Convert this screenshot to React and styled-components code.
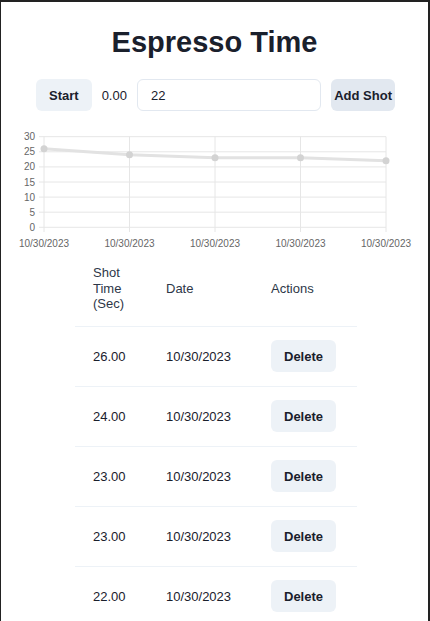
import styled, { createGlobalStyle } from "styled-components";

const GlobalStyle = createGlobalStyle`
  html, body {
    margin: 0;
    padding: 0;
    background: #fff;
  }
  body {
    font-family: "Liberation Sans", Arial, sans-serif;
    color: #1a202c;
  }
  * { box-sizing: border-box; }
`;

const Frame = styled.div`
  min-height: 100vh;
  border-top: 2px solid #222;
  border-left: 1px solid #222;
  border-right: 2px solid #222;
  padding-top: 22px;
  overflow: hidden;
`;

const Title = styled.h1`
  margin: 0;
  font-size: 29px;
  line-height: 36px;
  font-weight: 700;
  text-align: center;
  color: #1a202c;
`;

const Controls = styled.div`
  display: flex;
  align-items: center;
  gap: 10px;
  width: 359px;
  margin: 19px 0 0 35px;
`;

const Button = styled.button`
  flex-shrink: ${(p) => (p.$squeeze ? 1 : 0)};
  min-width: 0;
  height: 32px;
  padding: 0 ${(p) => (p.$squeeze ? 3 : 13)}px;
  border: none;
  border-radius: 6px;
  background: ${(p) => (p.$active ? "#e2e8f0" : "#edf2f7")};
  color: #1a202c;
  font-family: inherit;
  font-size: 13px;
  font-weight: 700;
  white-space: nowrap;
  cursor: pointer;
`;

const Timer = styled.span`
  font-size: 13px;
  color: #1a202c;
`;

const Input = styled.input`
  flex: 1;
  min-width: 0;
  width: 183px;
  height: 32px;
  padding: 0 13px;
  border: 1px solid #e2e8f0;
  border-radius: 6px;
  font-family: inherit;
  font-size: 13px;
  color: #1a202c;
  outline: none;
`;

const ChartSvg = styled.svg`
  display: block;
  margin-top: 19px;
`;

const Table = styled.table`
  width: 282px;
  margin: 0 0 0 74px;
  border-collapse: collapse;
  font-size: 13px;
`;

const Th = styled.th`
  width: ${(p) => p.$w}px;
  padding: 13px 18px 14px;
  text-align: left;
  font-weight: 400;
  line-height: 15.6px;
  color: #2d3748;
  vertical-align: middle;
  border-bottom: 1px solid #edf2f7;
`;

const Td = styled.td`
  height: 60px;
  padding: 0 18px;
  vertical-align: middle;
  border-bottom: 1px solid #edf2f7;
  color: #1a202c;
`;

const shots = [26, 24, 23, 23, 22];
const xs = [44, 129.5, 215, 300.5, 386];
const yOf = (v) => 227.3 - v * 3.02;

function ShotChart() {
  const ticks = [0, 5, 10, 15, 20, 25, 30];
  return (
    <ChartSvg width="427" height="122" viewBox="1 130 427 122">
      {ticks.map((t) => (
        <g key={t}>
          <line x1="39" x2="386" y1={yOf(t)} y2={yOf(t)} stroke="#e6e6e6" strokeWidth="1" />
          <text x="35" y={yOf(t) + 3.5} textAnchor="end" fontSize="10" fill="#666" fontFamily="Liberation Sans, Arial, sans-serif">
            {t}
          </text>
        </g>
      ))}
      {xs.map((x) => (
        <g key={x}>
          <line x1={x} x2={x} y1={yOf(30)} y2="232" stroke="#e6e6e6" strokeWidth="1" />
          <text x={x} y="246.5" textAnchor="middle" fontSize="10" fill="#666" fontFamily="Liberation Sans, Arial, sans-serif">
            10/30/2023
          </text>
        </g>
      ))}
      <polyline
        points={shots.map((s, i) => `${xs[i]},${yOf(s)}`).join(" ")}
        fill="none"
        stroke="#e2e2e2"
        strokeWidth="3"
      />
      {shots.map((s, i) => (
        <circle key={i} cx={xs[i]} cy={yOf(s)} r="3.5" fill="#d3d3d3" />
      ))}
    </ChartSvg>
  );
}

export default function App() {
  return (
    <>
      <GlobalStyle />
      <Frame>
        <Title>Espresso Time</Title>
        <Controls>
          <Button>Start</Button>
          <Timer>0.00</Timer>
          <Input defaultValue="22" />
          <Button $active $squeeze>Add Shot</Button>
        </Controls>
        <ShotChart />
        <Table>
          <thead>
            <tr>
              <Th $w={73}>Shot Time (Sec)</Th>
              <Th $w={105}>Date</Th>
              <Th $w={104}>Actions</Th>
            </tr>
          </thead>
          <tbody>
            {shots.map((s, i) => (
              <tr key={i}>
                <Td>{s.toFixed(2)}</Td>
                <Td>10/30/2023</Td>
                <Td>
                  <Button>Delete</Button>
                </Td>
              </tr>
            ))}
          </tbody>
        </Table>
      </Frame>
    </>
  );
}
